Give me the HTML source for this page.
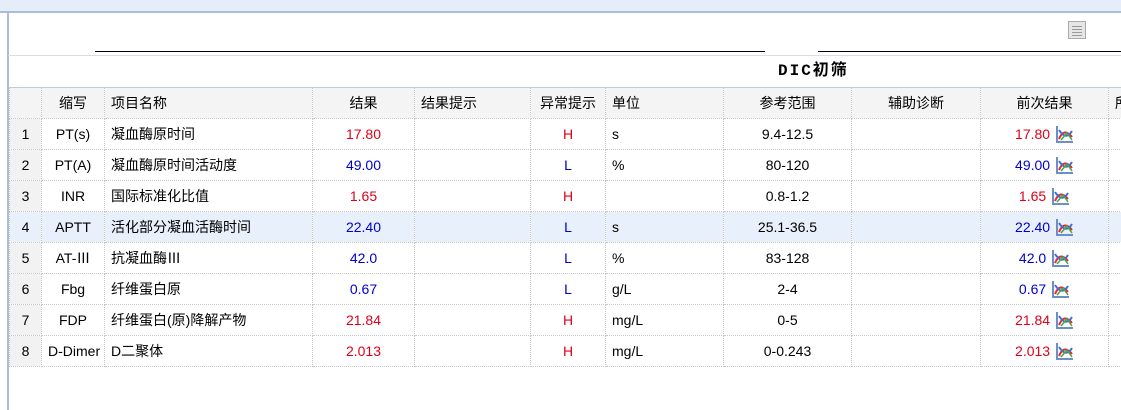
<!DOCTYPE html>
<html><head><meta charset="utf-8">
<style>
body{margin:0;width:1121px;height:410px;overflow:hidden;background:#fff;position:relative;font-family:"Liberation Sans","Noto Sans CJK SC",sans-serif;font-size:14px;color:#000}
.top{position:absolute;left:0;top:0;width:1121px;height:11px;background:#e4edf8;border-bottom:2px solid #a9bfd9}
.lb{position:absolute;left:7px;top:13px;width:2px;height:397px;background:#a9bfd9}
.ln{position:absolute;top:51px;height:1px;background:#000}
.ln2{position:absolute;left:8px;top:55px;width:1113px;height:1px;background:#d6dde6}
.title{position:absolute;left:778px;top:56px;font-weight:bold;font-size:16px;letter-spacing:2px;font-family:"Liberation Mono","Noto Sans CJK SC",monospace}
.btn{position:absolute;left:1068px;top:21px;width:18px;height:18px;background:#e6e6e6;border:1px solid #aaa;box-sizing:border-box}
.btn i{position:absolute;left:3px;width:10px;height:1px;background:#999}
table{position:absolute;left:9px;top:87px;border-collapse:collapse;table-layout:fixed;width:1130px}
td{height:30px;border:1px dotted #c8c8c8;padding:0 6px;white-space:nowrap;overflow:hidden}
tr.h td{background:#f4f4f4;border-top:1px solid #c0ccd8}
td.i{background:#f2f2f2;text-align:center}
.c{text-align:center}.r{text-align:right}
.red{color:#e0001a}.blue{color:#0000d0}
tr.sel td{background:#e8f0fb}
tr.sel td.i{background:#e8f0fb}
svg{vertical-align:-4px;margin-left:2px}
</style></head><body>
<div class="top"></div><div class="lb"></div>
<div class="ln" style="left:95px;width:670px"></div>
<div class="ln" style="left:818px;width:303px"></div>
<div class="ln2"></div>
<div class="btn"><i style="top:4px"></i><i style="top:7px"></i><i style="top:10px"></i><i style="top:13px"></i></div>
<div class="title">DIC初筛</div>
<table>
<colgroup><col style="width:32px"><col style="width:63px"><col style="width:208px"><col style="width:102px"><col style="width:116px"><col style="width:75px"><col style="width:118px"><col style="width:128px"><col style="width:129px"><col style="width:128px"><col style="width:31px"></colgroup>
<tr class="h"><td></td><td class="c">缩写</td><td>项目名称</td><td class="c">结果</td><td>结果提示</td><td class="c">异常提示</td><td>单位</td><td class="c">参考范围</td><td class="c">辅助诊断</td><td class="c">前次结果</td><td>所</td></tr>
<tr><td class="i">1</td><td class="c">PT(s)</td><td>凝血酶原时间</td><td class="c red">17.80</td><td></td><td class="c red">H</td><td>s</td><td class="c">9.4-12.5</td><td></td><td class="c red">17.80 <svg width="18" height="18"><path d="M1 1V17H17" stroke="#6b8fc6" fill="none" stroke-width="2"/><path d="M3 14Q8 2 16 12" stroke="#e23" fill="none" stroke-width="2"/><path d="M3 5Q10 16 16 6" stroke="#3a6fd8" fill="none" stroke-width="2"/><path d="M5 15L11 8L16 15" stroke="#4a4" fill="none" stroke-width="1.5"/></svg></td><td></td></tr>
<tr><td class="i">2</td><td class="c">PT(A)</td><td>凝血酶原时间活动度</td><td class="c blue">49.00</td><td></td><td class="c blue">L</td><td>%</td><td class="c">80-120</td><td></td><td class="c blue">49.00 <svg width="18" height="18"><path d="M1 1V17H17" stroke="#6b8fc6" fill="none" stroke-width="2"/><path d="M3 14Q8 2 16 12" stroke="#e23" fill="none" stroke-width="2"/><path d="M3 5Q10 16 16 6" stroke="#3a6fd8" fill="none" stroke-width="2"/><path d="M5 15L11 8L16 15" stroke="#4a4" fill="none" stroke-width="1.5"/></svg></td><td></td></tr>
<tr><td class="i">3</td><td class="c">INR</td><td>国际标准化比值</td><td class="c red">1.65</td><td></td><td class="c red">H</td><td></td><td class="c">0.8-1.2</td><td></td><td class="c red">1.65 <svg width="18" height="18"><path d="M1 1V17H17" stroke="#6b8fc6" fill="none" stroke-width="2"/><path d="M3 14Q8 2 16 12" stroke="#e23" fill="none" stroke-width="2"/><path d="M3 5Q10 16 16 6" stroke="#3a6fd8" fill="none" stroke-width="2"/><path d="M5 15L11 8L16 15" stroke="#4a4" fill="none" stroke-width="1.5"/></svg></td><td></td></tr>
<tr class="sel"><td class="i">4</td><td class="c">APTT</td><td>活化部分凝血活酶时间</td><td class="c blue">22.40</td><td></td><td class="c blue">L</td><td>s</td><td class="c">25.1-36.5</td><td></td><td class="c blue">22.40 <svg width="18" height="18"><path d="M1 1V17H17" stroke="#6b8fc6" fill="none" stroke-width="2"/><path d="M3 14Q8 2 16 12" stroke="#e23" fill="none" stroke-width="2"/><path d="M3 5Q10 16 16 6" stroke="#3a6fd8" fill="none" stroke-width="2"/><path d="M5 15L11 8L16 15" stroke="#4a4" fill="none" stroke-width="1.5"/></svg></td><td></td></tr>
<tr><td class="i">5</td><td class="c">AT-Ⅲ</td><td>抗凝血酶Ⅲ</td><td class="c blue">42.0</td><td></td><td class="c blue">L</td><td>%</td><td class="c">83-128</td><td></td><td class="c blue">42.0 <svg width="18" height="18"><path d="M1 1V17H17" stroke="#6b8fc6" fill="none" stroke-width="2"/><path d="M3 14Q8 2 16 12" stroke="#e23" fill="none" stroke-width="2"/><path d="M3 5Q10 16 16 6" stroke="#3a6fd8" fill="none" stroke-width="2"/><path d="M5 15L11 8L16 15" stroke="#4a4" fill="none" stroke-width="1.5"/></svg></td><td></td></tr>
<tr><td class="i">6</td><td class="c">Fbg</td><td>纤维蛋白原</td><td class="c blue">0.67</td><td></td><td class="c blue">L</td><td>g/L</td><td class="c">2-4</td><td></td><td class="c blue">0.67 <svg width="18" height="18"><path d="M1 1V17H17" stroke="#6b8fc6" fill="none" stroke-width="2"/><path d="M3 14Q8 2 16 12" stroke="#e23" fill="none" stroke-width="2"/><path d="M3 5Q10 16 16 6" stroke="#3a6fd8" fill="none" stroke-width="2"/><path d="M5 15L11 8L16 15" stroke="#4a4" fill="none" stroke-width="1.5"/></svg></td><td></td></tr>
<tr><td class="i">7</td><td class="c">FDP</td><td>纤维蛋白(原)降解产物</td><td class="c red">21.84</td><td></td><td class="c red">H</td><td>mg/L</td><td class="c">0-5</td><td></td><td class="c red">21.84 <svg width="18" height="18"><path d="M1 1V17H17" stroke="#6b8fc6" fill="none" stroke-width="2"/><path d="M3 14Q8 2 16 12" stroke="#e23" fill="none" stroke-width="2"/><path d="M3 5Q10 16 16 6" stroke="#3a6fd8" fill="none" stroke-width="2"/><path d="M5 15L11 8L16 15" stroke="#4a4" fill="none" stroke-width="1.5"/></svg></td><td></td></tr>
<tr><td class="i">8</td><td class="c">D-Dimer</td><td>D二聚体</td><td class="c red">2.013</td><td></td><td class="c red">H</td><td>mg/L</td><td class="c">0-0.243</td><td></td><td class="c red">2.013 <svg width="18" height="18"><path d="M1 1V17H17" stroke="#6b8fc6" fill="none" stroke-width="2"/><path d="M3 14Q8 2 16 12" stroke="#e23" fill="none" stroke-width="2"/><path d="M3 5Q10 16 16 6" stroke="#3a6fd8" fill="none" stroke-width="2"/><path d="M5 15L11 8L16 15" stroke="#4a4" fill="none" stroke-width="1.5"/></svg></td><td></td></tr>
</table>
</body></html>
